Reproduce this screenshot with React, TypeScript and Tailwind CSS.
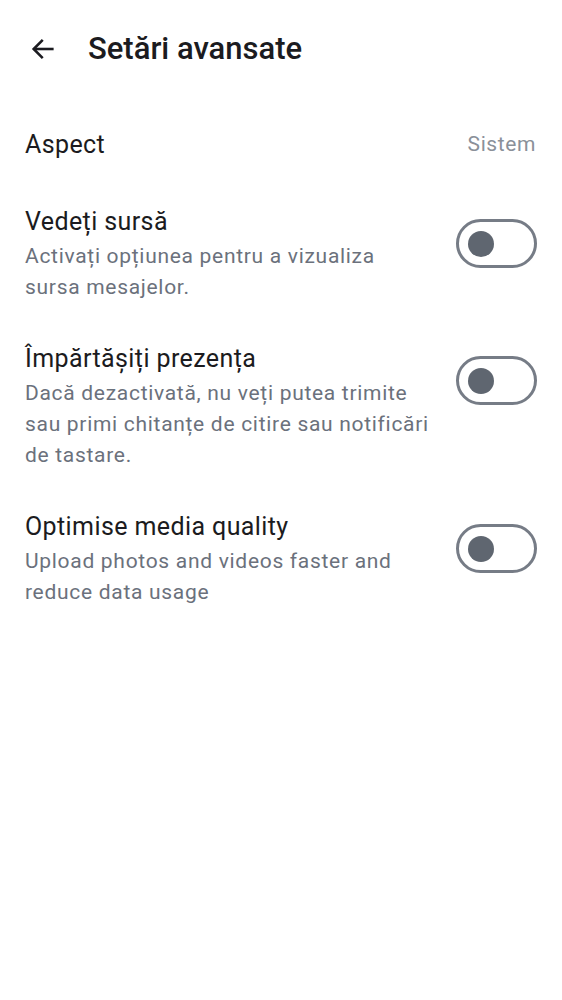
import React from "react";

function Toggle() {
  return (
    <div className="w-[81px] h-[49px] shrink-0 rounded-full border-[3px] border-[#767c86] flex items-center pl-[9px]">
      <div className="w-[26px] h-[26px] rounded-full bg-[#5f6670]" />
    </div>
  );
}

function Row({ title, desc }: { title: string; desc: string[] }) {
  return (
    <div className="flex items-start justify-between">
      <div className="flex flex-col">
        <div className="text-[25px] leading-[32px] tracking-[0.4px] text-[#1b1b20]">{title}</div>
        <div className="mt-[3px] text-[21px] leading-[31px] tracking-[0.7px] text-[#6b717c]">
          {desc.map((d, i) => (
            <div key={i} className="whitespace-nowrap">{d}</div>
          ))}
        </div>
      </div>
      <div className="pt-[13px]">
        <Toggle />
      </div>
    </div>
  );
}

export default function App() {
  return (
    <div
      className="w-[562px] h-[1000px] bg-white"
      style={{ fontFamily: "Roboto, 'Noto Sans', sans-serif" }}
    >
      <div className="flex items-center h-[98px] pl-[29px]">
        <svg width="28" height="28" viewBox="0 0 24 24" fill="none" stroke="#1b1b20" strokeWidth="2.2" strokeLinecap="square">
          <path d="M20 12H5" />
          <path d="M11 5l-7 7 7 7" strokeLinejoin="miter" />
        </svg>
        <div className="ml-[31px] text-[31px] leading-[34px] font-medium text-[#1b1b20]">Setări avansate</div>
      </div>
      <div className="px-[25px]">
        <div className="flex items-center justify-between h-[92px] pt-[2px]">
          <div className="text-[25px] tracking-[0.4px] text-[#1b1b20]">Aspect</div>
          <div className="text-[21px] tracking-[0.6px] text-[#8a9099] pr-[1px]">Sistem</div>
        </div>
        <div className="mt-[16px] flex flex-col gap-[40px]">
          <Row title="Vedeți sursă" desc={["Activați opțiunea pentru a vizualiza", "sursa mesajelor."]} />
          <Row
            title="Împărtășiți prezența"
            desc={["Dacă dezactivată, nu veți putea trimite", "sau primi chitanțe de citire sau notificări", "de tastare."]}
          />
          <Row title="Optimise media quality" desc={["Upload photos and videos faster and", "reduce data usage"]} />
        </div>
      </div>
    </div>
  );
}
